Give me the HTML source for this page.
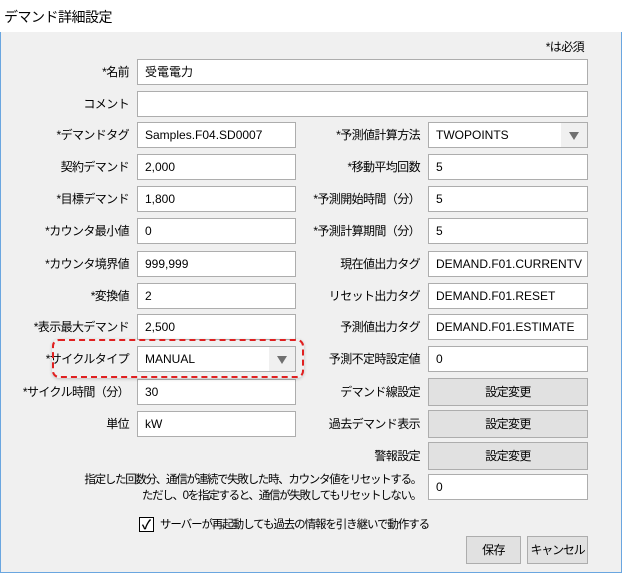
<!DOCTYPE html><html><head><meta charset="utf-8"><style>
body{margin:0;width:622px;height:573px;overflow:hidden;font-family:"Liberation Sans","Noto Sans CJK JP",sans-serif;font-size:12px;letter-spacing:-0.6px;color:#000;position:relative}
.win{position:absolute;left:0;top:0;width:620px;height:572px;border:1px solid #6aa6e0;border-top:none;background:#f0f0f0}
.title{position:absolute;left:0;top:0;width:622px;height:32px;background:#fff;font-size:14px;letter-spacing:-0.5px}
.title span{position:absolute;left:4px;top:7px}
.l{position:absolute;text-align:right;white-space:nowrap}
.i{position:absolute;height:26px;background:#fff;border:1px solid #adadad;box-sizing:border-box;padding-left:7px;line-height:24px;font-size:12px;letter-spacing:0;overflow:hidden;white-space:nowrap}
.s::after{content:"";position:absolute;right:0;top:0;width:26px;height:24px;background:#f0f0f0}
.s b{position:absolute;right:8px;top:9px;width:0;height:0;border-left:5px solid transparent;border-right:5px solid transparent;border-top:8px solid #707070;z-index:1}
.btn{position:absolute;height:28px;background:#e1e1e1;border:1px solid #adadad;box-sizing:border-box;text-align:center;line-height:26px;white-space:nowrap}
</style></head><body>
<div class="win"></div>
<div class="title"><span>デマンド詳細設定</span></div>
<div class="l" style="right:38px;top:38px">*は必須</div>
<div id="c"></div>
<div style="position:absolute;left:52px;top:339px;width:252px;height:39px;border:2px dashed #e02020;border-radius:7px;box-sizing:border-box;box-shadow:0 1px 3px rgba(0,0,0,.2)"></div>
<div class="l" style="right:201px;top:472px;line-height:16px;font-size:11.5px;letter-spacing:-1.3px">指定した回数分、通信が連続で失敗した時、カウンタ値をリセットする。<br>ただし、0を指定すると、通信が失敗してもリセットしない。</div>
<div class="i" style="left:428px;top:474px;width:160px">0</div>
<div style="position:absolute;left:139px;top:517px;width:13px;height:13px;border:1px solid #000;background:#fff;font-size:13px;line-height:13px;text-align:center;font-weight:bold;letter-spacing:0">✓</div>
<div class="l" style="left:160px;top:516px;font-size:11.5px;letter-spacing:-1.1px">サーバーが再起動しても過去の情報を引き継いで動作する</div>
<div class="btn" style="left:466px;top:536px;width:55px">保存</div>
<div class="btn" style="left:527px;top:536px;width:61px;letter-spacing:-1.2px">キャンセル</div>
<script>
var L=[["*名前",72,"受電電力",1],["コメント",104,"",1],["*デマンドタグ",135,"Samples.F04.SD0007"],["契約デマンド",167,"2,000"],["*目標デマンド",199,"1,800"],["*カウンタ最小値",231,"0"],["*カウンタ境界値",264,"999,999"],["*変換値",296,"2"],["*表示最大デマンド",327,"2,500"],["*サイクルタイプ",359,"MANUAL",2],["*サイクル時間（分）",392,"30"],["単位",424,"kW"]];
var R=[["*予測値計算方法",135,"TWOPOINTS",2],["*移動平均回数",167,"5"],["*予測開始時間（分）",199,"5"],["*予測計算期間（分）",231,"5"],["現在値出力タグ",264,"DEMAND.F01.CURRENTV"],["リセット出力タグ",296,"DEMAND.F01.RESET"],["予測値出力タグ",327,"DEMAND.F01.ESTIMATE"],["予測不定時設定値",359,"0"],["デマンド線設定",392,"設定変更",3],["過去デマンド表示",424,"設定変更",3],["警報設定",456,"設定変更",3]];
var h="";
L.forEach(function(r){h+='<div class="l" style="right:'+(622-129)+'px;top:'+(r[1]-9)+'px">'+r[0]+'</div>';
h+='<div class="i'+(r[3]==2?' s':'')+'" style="left:137px;top:'+(r[1]-13)+'px;width:'+(r[3]==1?451:159)+'px">'+r[2]+(r[3]==2?'<b></b>':'')+'</div>';});
R.forEach(function(r){h+='<div class="l" style="right:'+(622-420)+'px;top:'+(r[1]-9)+'px">'+r[0]+'</div>';
if(r[3]==3)h+='<div class="btn" style="left:428px;top:'+(r[1]-14)+'px;width:160px">'+r[2]+'</div>';
else h+='<div class="i'+(r[3]==2?' s':'')+'" style="left:428px;top:'+(r[1]-13)+'px;width:160px">'+r[2]+(r[3]==2?'<b></b>':'')+'</div>';});
document.getElementById("c").innerHTML=h;
</script>
</body></html>
